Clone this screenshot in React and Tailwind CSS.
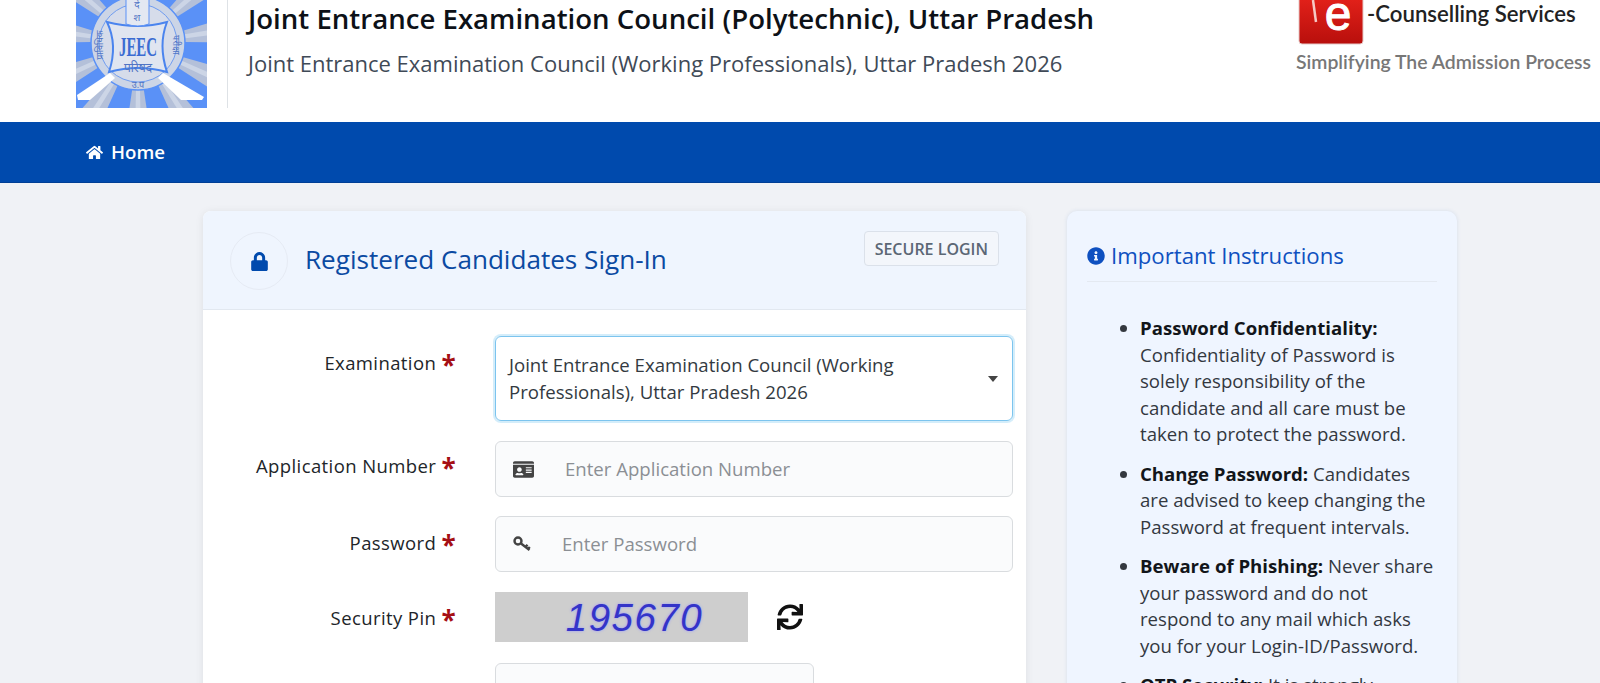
import { FaHome, FaLock, FaIdCard, FaSync, FaInfoCircle } from 'react-icons/fa'

function JeecLogo() {
  const cx = 62
  const cy = 43
  const rays = []
  for (let i = 0; i < 22; i++) {
    const a = (i * 360) / 22
    const s = 7.5
    const big = i % 2 === 0
    rays.push(
      <polygon
        key={i}
        points={big ? `${-s},-46 ${s},-46 ${s * 2},-100 ${-s * 2},-100` : `-2,-46 2,-46 3,-100 -3,-100`}
        fill={big ? '#5a91f7' : '#ccd5e6'}
        transform={`translate(${cx} ${cy}) rotate(${a})`}
      />
    )
  }
  const hindi = "'Noto Sans', sans-serif"
  return (
    <svg width="131" height="108" viewBox="0 0 131 108" className="shrink-0">
      <rect width="131" height="108" fill="#b4c0d9" />
      {rays}
      <circle cx={cx} cy={cy} r="47" fill="#ccd5e6" stroke="#5a91f7" strokeWidth="1.5" />
      <circle cx={cx} cy={cy} r="39" fill="#d6dcea" stroke="#6f9cf0" strokeWidth="1" />
      <path d="M31 22 Q62 30 91 22 Q82 45 91 72 Q62 64 33 72 Q42 45 31 22 Z" fill="#e0e5f0" stroke="#4a84ee" strokeWidth="2" />
      <path d="M50 -2 H73 V24 Q62 28 50 24 Z" fill="#e3e8f2" stroke="#5a91f7" strokeWidth="1" />
      <text x="61" y="8" textAnchor="middle" fontSize="10" fill="#4f74c4" fontFamily={hindi}>दे</text>
      <text x="61" y="21" textAnchor="middle" fontSize="10" fill="#4f74c4" fontFamily={hindi}>श</text>
      <text x="62" y="56" textAnchor="middle" fontSize="28" fontWeight="700" fill="#3b6cd2" fontFamily="'Liberation Serif', serif" textLength="38" lengthAdjust="spacingAndGlyphs">JEEC</text>
      <text x="62" y="72" textAnchor="middle" fontSize="12" fill="#4f74c4" fontFamily={hindi}>परिषद</text>
      <text x="62" y="88" textAnchor="middle" fontSize="9" fill="#4f74c4" fontFamily={hindi}>उ.प</text>
      <text transform="translate(27 45) rotate(-90)" textAnchor="middle" fontSize="9" fill="#4f74c4" fontFamily={hindi}>प्राविधिक</text>
      <text transform="translate(97 45) rotate(90)" textAnchor="middle" fontSize="9" fill="#4f74c4" fontFamily={hindi}>परीक्षा</text>
      <path d="M1 95 L34 73 L39 78 L14 100 L2 100 Z" fill="#fff" />
      <path d="M128 97 L87 73 L82 78 L105 100 L126 100 Z" fill="#fff" />
    </svg>
  )
}

function CounsellingLogo() {
  return (
    <div className="w-[296px] shrink-0 ml-auto mr-[10px]">
      <div className="flex items-start pl-[4px]">
        <svg width="69" height="46" viewBox="0 0 69 46" className="shrink-0">
          <defs>
            <linearGradient id="redBox" x1="0" y1="0" x2="0" y2="1">
              <stop offset="0" stopColor="#ea241c" />
              <stop offset="1" stopColor="#b80f0c" />
            </linearGradient>
          </defs>
          <rect x="1" y="-10" width="64" height="54" rx="3" fill="url(#redBox)" stroke="#e5c9c7" />
          <path d="M15 0 L18 22" stroke="#f6c9c5" strokeWidth="2.5" fill="none" />
          <text x="40" y="30" textAnchor="middle" fontSize="48" fontFamily="'Liberation Sans', sans-serif" fill="#fff" stroke="#fff" strokeWidth="1">e</text>
        </svg>
        <span className="mt-[1px] text-[22.2px] leading-[26px] font-semibold text-[#222] whitespace-nowrap font-['Lato',sans-serif]">-Counselling Services</span>
      </div>
      <div className="mt-[4px] pl-[2px] text-[19.4px] leading-[24px] font-semibold text-[#777] whitespace-nowrap font-['Lato',sans-serif]">Simplifying The Admission Process</div>
    </div>
  )
}

function KeyIcon() {
  return (
    <svg width="18" height="16" viewBox="0 0 18 16" fill="none" stroke="#444" strokeWidth="2.4" className="shrink-0">
      <circle cx="5" cy="5" r="3.5" />
      <path d="M8 7.5 L16.5 14 M12.5 11 L14.5 8.8 M15 12.8 L16.8 11" />
    </svg>
  )
}

function Label({ children, className = '' }) {
  return (
    <div className={`${className} w-[252px] shrink-0 pr-[39px] text-right text-[18.5px] leading-[26px] font-medium tracking-[0.4px] text-[#212529] whitespace-nowrap`}>
      {children} <span className="text-[#a50f14] font-bold text-[26px] leading-[20px] align-middle">*</span>
    </div>
  )
}

function IconInput({ icon, placeholder, gap }) {
  return (
    <div className="w-[518px] h-[56px] flex items-center rounded-[6px] border border-[#d9dcdf] bg-[#fafbfc] pl-[17px]">
      {icon}
      <input placeholder={placeholder} className={`${gap} flex-1 min-w-0 bg-transparent outline-none text-[18.6px] text-[#212529] placeholder:text-[#8b8f94]`} />
    </div>
  )
}

function Instruction({ title, children }) {
  return (
    <li className="mb-[13px]">
      <strong className="font-bold text-[#12151a]">{title}</strong> {children}
    </li>
  )
}

export default function App() {
  return (
    <div className="h-[683px] overflow-hidden bg-[#f0f2f6] font-['Open_Sans',sans-serif]">
      <header className="h-[122px] bg-white flex items-start pl-[76px]">
        <JeecLogo />
        <div className="ml-[20px] h-[108px] border-l border-[#dee2e6] pl-[20px] whitespace-nowrap">
          <h1 className="mt-[1px] text-[27.6px] leading-[34px] font-semibold text-[#0d1117]">Joint Entrance Examination Council (Polytechnic), Uttar Pradesh</h1>
          <p className="mt-[14px] text-[22px] leading-[28px] text-[#3f4a57]">Joint Entrance Examination Council (Working Professionals), Uttar Pradesh 2026</p>
        </div>
        <CounsellingLogo />
      </header>

      <nav className="h-[61px] bg-[#004aad] flex items-center pl-[86px] text-white border-b border-[#003f96]">
        <FaHome className="text-[17px]" />
        <span className="ml-[8px] text-[18.7px] font-semibold">Home</span>
      </nav>

      <main className="flex items-start pt-[28px] pl-[203px]">
        <section className="w-[823px] shrink-0 bg-white rounded-t-[8px] shadow-[0_1px_8px_rgba(0,0,0,0.08)]">
          <div className="h-[99px] bg-[#eff5fe] rounded-t-[8px] border-b border-[#e2e8f0] flex items-start pl-[27px] pr-[27px]">
            <div className="mt-[21px] w-[58px] h-[58px] rounded-full border border-[#e6ebf4] flex items-center justify-center text-[#004aad]">
              <FaLock className="text-[19px]" />
            </div>
            <h2 className="mt-[30px] ml-[17px] text-[26.1px] leading-[36px] font-medium text-[#0b4aa2] whitespace-nowrap">Registered Candidates Sign-In</h2>
            <span className="ml-auto mt-[20px] h-[35px] px-[10px] flex items-center rounded-[4px] border border-[#dbe1ea] bg-[#f3f6fb] text-[16px] font-semibold text-[#5b6775] whitespace-nowrap">SECURE LOGIN</span>
          </div>

          <div className="pt-[26px] pl-[40px]">
            <div className="flex items-start">
              <div className="pt-[14px]"><Label>Examination</Label></div>
              <div className="w-[518px] h-[85px] flex items-center rounded-[6px] border border-[#7cc4ee] shadow-[0_0_0_2px_rgba(132,204,240,0.35)] pl-[13px] pr-[14px]">
                <div className="flex-1 text-[18.6px] leading-[26.5px] text-[#333a41]">Joint Entrance Examination Council (Working Professionals), Uttar Pradesh 2026</div>
                <div className="w-0 h-0 border-x-[5px] border-x-transparent border-t-[6px] border-t-[#444] ml-[40px]" />
              </div>
            </div>
            <div className="flex items-center mt-[20px]">
              <Label className="pb-[6px]">Application Number</Label>
              <IconInput icon={<FaIdCard className="text-[#444] text-[21px]" />} placeholder="Enter Application Number" gap="ml-[31px]" />
            </div>
            <div className="flex items-center mt-[19px]">
              <Label className="pb-[2px]">Password</Label>
              <IconInput icon={<KeyIcon />} placeholder="Enter Password" gap="ml-[31px]" />
            </div>
            <div className="flex items-center mt-[20px]">
              <Label className="pt-[2px]">Security Pin</Label>
              <div className="w-[253px] h-[50px] pt-[2px] pl-[26px] bg-[#cecece] flex items-center justify-center text-[38.5px] italic tracking-[1.5px] font-['Liberation_Sans',sans-serif] text-[#3434c8] [text-shadow:0_0_3px_#9a9aff]">195670</div>
              <FaSync className="ml-[29px] text-[26px] text-[#111]" />
            </div>
            <div className="ml-[252px] mt-[21px] w-[319px] h-[56px] rounded-[6px] border border-[#d9dcdf] bg-[#fafbfc]" />
          </div>
        </section>

        <aside className="ml-[41px] w-[390px] shrink-0 h-[600px] bg-[#eff5ff] rounded-[10px] shadow-[0_0_4px_rgba(30,80,160,0.12)] px-[20px] pt-[29px] text-[18.6px] leading-[26.5px] text-[#33383f]">
          <h3 className="flex items-center pb-[9px] border-b border-[#e4e9f1] text-[22.2px] leading-[32px] font-medium text-[#0e50c0]">
            <FaInfoCircle className="text-[18px] mr-[6px]" />
            Important Instructions
          </h3>
          <ul className="list-disc mt-[33px] pl-[53px]">
            <Instruction title="Password Confidentiality:">Confidentiality of Password is solely responsibility of the candidate and all care must be taken to protect the password.</Instruction>
            <Instruction title="Change Password:">Candidates are advised to keep changing the Password at frequent intervals.</Instruction>
            <Instruction title="Beware of Phishing:">Never share your password and do not respond to any mail which asks you for your Login-ID/Password.</Instruction>
            <Instruction title="OTP Security:">It is strongly</Instruction>
          </ul>
        </aside>
      </main>
    </div>
  )
}
